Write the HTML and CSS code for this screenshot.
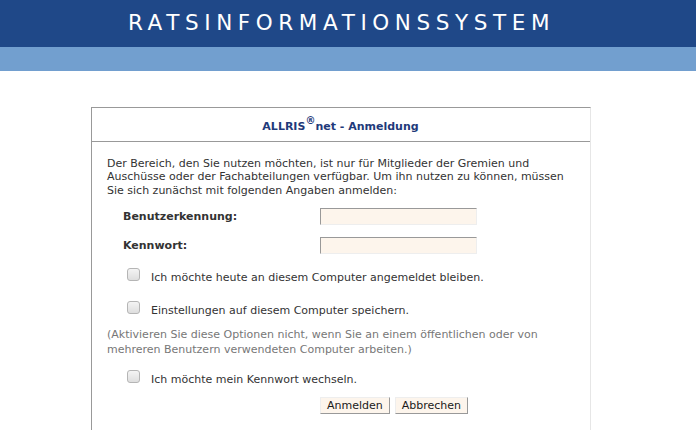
FILE: index.html
```html
<!DOCTYPE html>
<html lang="de">
<head>
<meta charset="utf-8">
<title>ALLRIS net - Anmeldung</title>
<link rel="stylesheet" href="styles.css">
</head>
<body>
<header class="top">
  <div class="top-dark"><h1 class="brand">RATSINFORMATIONSSYSTEM</h1></div>
  <div class="top-light"></div>
</header>
<main class="box">
  <div class="box-title">ALLRIS<sup class="reg">®</sup>net - Anmeldung</div>
  <form class="box-body">
    <p class="intro">Der Bereich, den Sie nutzen möchten, ist nur für Mitglieder der Gremien und Auschüsse oder der Fachabteilungen verfügbar. Um ihn nutzen zu können, müssen Sie sich zunächst mit folgenden Angaben anmelden:</p>
    <div class="field field-first">
      <label class="field-label" for="user">Benutzerkennung:</label>
      <input class="text-input" id="user" type="text">
    </div>
    <div class="field">
      <label class="field-label" for="pw">Kennwort:</label>
      <input class="text-input" id="pw" type="password">
    </div>
    <label class="check check-1"><span class="cb"></span><span>Ich möchte heute an diesem Computer angemeldet bleiben.</span></label>
    <label class="check check-2"><span class="cb"></span><span>Einstellungen auf diesem Computer speichern.</span></label>
    <p class="note">(Aktivieren Sie diese Optionen nicht, wenn Sie an einem öffentlichen oder von mehreren Benutzern verwendeten Computer arbeiten.)</p>
    <label class="check check-3"><span class="cb"></span><span>Ich möchte mein Kennwort wechseln.</span></label>
    <div class="buttons">
      <button class="btn" type="button">Anmelden</button>
      <button class="btn" type="button">Abbrechen</button>
    </div>
  </form>
</main>
</body>
</html>
```

FILE: styles.css
```css
* { box-sizing: border-box; }
html, body { margin: 0; padding: 0; background: #fff; }
body {
  font-family: "DejaVu Sans", Verdana, sans-serif;
  font-size: 11px;
  color: #333;
  width: 696px;
  height: 430px;
  overflow: hidden;
}
.top-dark {
  height: 47px;
  background: #1f4888;
  width: 696px;
}
.brand {
  margin: 0;
  width: 679px;
  text-align: center;
  font-family: "DejaVu Sans", Verdana, sans-serif;
  font-weight: normal;
  font-size: 21.5px;
  letter-spacing: 5.6px;
  line-height: 46px;
  padding-left: 4px;
  color: #fff;
}
.top-light {
  height: 24px;
  background: #729fcf;
}
.box {
  margin: 36px 0 0 91px;
  width: 500px;
  border-top: 1px solid #999;
  border-left: 1px solid #999;
  border-right: 1px solid #e6e6e6;
  border-bottom: 1px solid #e6e6e6;
  height: 330px;
}
.box-title {
  height: 34px;
  border-bottom: 1px solid #999;
  text-align: center;
  font-weight: bold;
  color: #1f3a7a;
  line-height: 37px;
  padding-right: 1px;
}
.reg {
  font-size: 10px;
  line-height: 0;
  vertical-align: 6px;
}
.box-body {
  padding: 15px 15px 0 15px;
}
.intro {
  margin: 0;
  line-height: 13.4px;
}
.field {
  display: flex;
  align-items: center;
  height: 17px;
  margin-top: 12px;
  padding-left: 16px;
}
.field-first { margin-top: 11px; }
.field-label {
  width: 197px;
  font-weight: bold;
}
.text-input {
  width: 157px;
  height: 17px;
  margin: 0;
  padding: 0 2px;
  background: #fdf5ec;
  border-top: 1px solid #999;
  border-left: 1px solid #999;
  border-right: 1px solid #eee;
  border-bottom: 1px solid #eee;
  font: inherit;
}
.check {
  display: flex;
  align-items: center;
  height: 13px;
  padding-left: 20px;
  gap: 11px;
}
.check-1 { margin-top: 14px; }
.check-2 { margin-top: 20px; }
.check-3 { margin-top: 13px; }
.cb {
  width: 13px;
  height: 13px;
  flex: none;
  border: 1px solid #b5b5b5;
  border-radius: 3px;
  background: linear-gradient(#f4f4f4, #dedede);
}
.check span:last-child { position: relative; top: 3px; }
.note {
  margin: 14px 0 0 0;
  color: #777;
  line-height: 14.5px;
}
.buttons {
  display: flex;
  gap: 5px;
  margin-top: 14px;
  padding-left: 213px;
}
.btn {
  height: 17px;
  margin: 0;
  padding: 0 6px;
  background: #fdf5ec;
  border-top: 1px solid #eee;
  border-left: 1px solid #eee;
  border-right: 1px solid #999;
  border-bottom: 1px solid #999;
  font: inherit;
  font-size: 11px;
  line-height: 14px;
  color: #1a1a1a;
}
```
